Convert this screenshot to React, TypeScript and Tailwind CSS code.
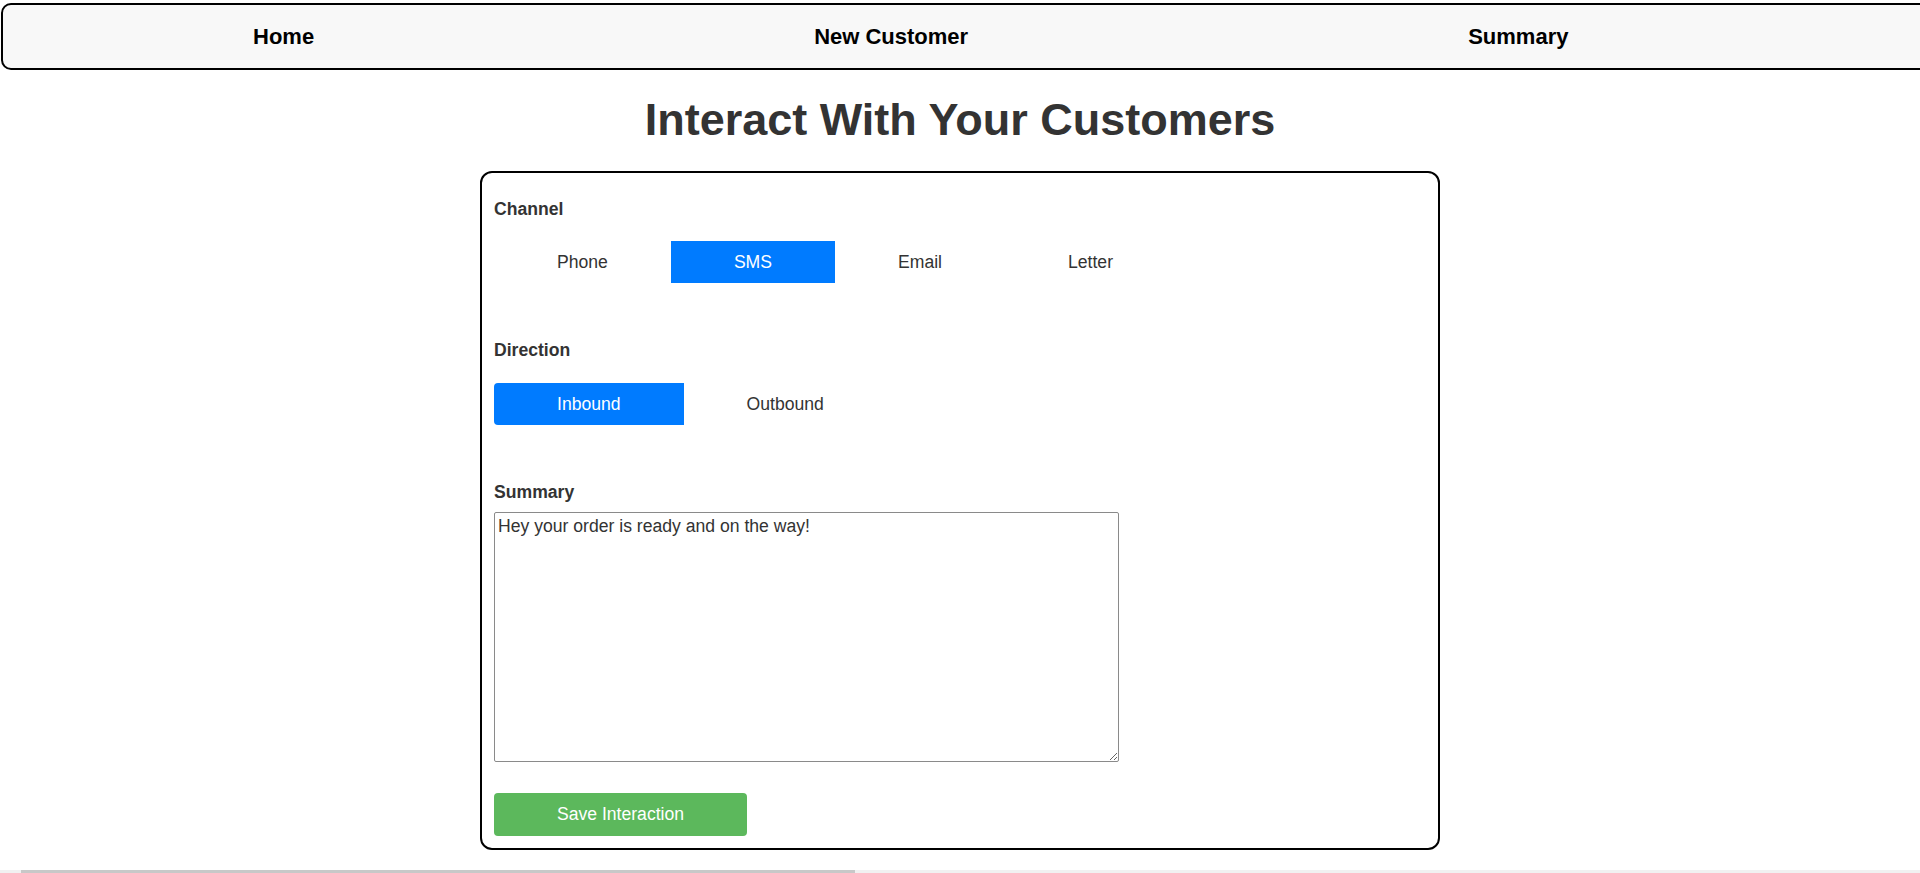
import { useState } from 'react'

const CHANNELS = ['Phone', 'SMS', 'Email', 'Letter']
const DIRECTIONS = ['Inbound', 'Outbound']

const NAV_LINKS = ['Home', 'New Customer', 'Summary']

function ToggleGroup({
  options,
  value,
  onChange,
}: {
  options: string[]
  value: string
  onChange: (v: string) => void
}) {
  return (
    <div className="flex">
      {options.map((opt, i) => (
        <button
          key={opt}
          type="button"
          onClick={() => onChange(opt)}
          className={`px-[63px] py-[11px] text-[17.6px] leading-[20px] ${
            i === 0 ? 'rounded-l-[4px]' : ''
          } ${i === options.length - 1 ? 'rounded-r-[4px]' : ''} ${
            value === opt ? 'bg-[#007bff] text-white' : 'bg-transparent text-[#333]'
          }`}
        >
          {opt}
        </button>
      ))}
    </div>
  )
}

export default function App() {
  const [channel, setChannel] = useState('SMS')
  const [direction, setDirection] = useState('Inbound')
  const [summary, setSummary] = useState('Hey your order is ready and on the way!')

  return (
    <div className="min-h-screen overflow-x-hidden bg-white font-['Liberation_Sans',Arial,sans-serif]">
      <div className="pl-[1px] pt-[3px]">
        <nav className="mr-[-40px] flex h-[67px] items-center rounded-[10px] border-2 border-black bg-[#f8f8f8]">
          {NAV_LINKS.map((link) => (
            <a key={link} href="#" className="px-[250px] text-[22px] font-bold text-black">
              {link}
            </a>
          ))}
        </nav>
      </div>

      <h1 className="mt-[24px] text-center text-[45px] font-bold leading-[51px] text-[#333]">
        Interact With Your Customers
      </h1>

      <form
        onSubmit={(e) => e.preventDefault()}
        className="mx-auto mt-[26px] w-1/2 rounded-[12px] border-2 border-black px-[12px] pt-[26px] pb-[12px]"
      >
        <label className="block text-[17.6px] font-bold leading-[20px] text-[#333]">Channel</label>
        <div className="mt-[22px]">
          <ToggleGroup options={CHANNELS} value={channel} onChange={setChannel} />
        </div>

        <label className="mt-[57px] block text-[17.6px] font-bold leading-[20px] text-[#333]">
          Direction
        </label>
        <div className="mt-[23px]">
          <ToggleGroup options={DIRECTIONS} value={direction} onChange={setDirection} />
        </div>

        <label className="mt-[57px] block text-[17.6px] font-bold leading-[20px] text-[#333]">
          Summary
        </label>
        <textarea
          value={summary}
          onChange={(e) => setSummary(e.target.value)}
          className="mt-[10px] block h-[250px] w-[625px] rounded-[2px] border border-[#8a8a8a] px-[3px] py-[3px] text-[17.6px] leading-[20px] text-[#333] outline-none"
        />

        <button
          type="submit"
          className="mt-[31px] block h-[43px] w-[253px] rounded-[4px] bg-[#5cb85c] text-[17.6px] text-white"
        >
          Save Interaction
        </button>
      </form>

      <div className="fixed right-0 bottom-0 left-0 h-[3px] bg-[#f1f1f1]">
        <div className="ml-[21px] h-full w-[834px] bg-[#c8c8c8]" />
      </div>
    </div>
  )
}
